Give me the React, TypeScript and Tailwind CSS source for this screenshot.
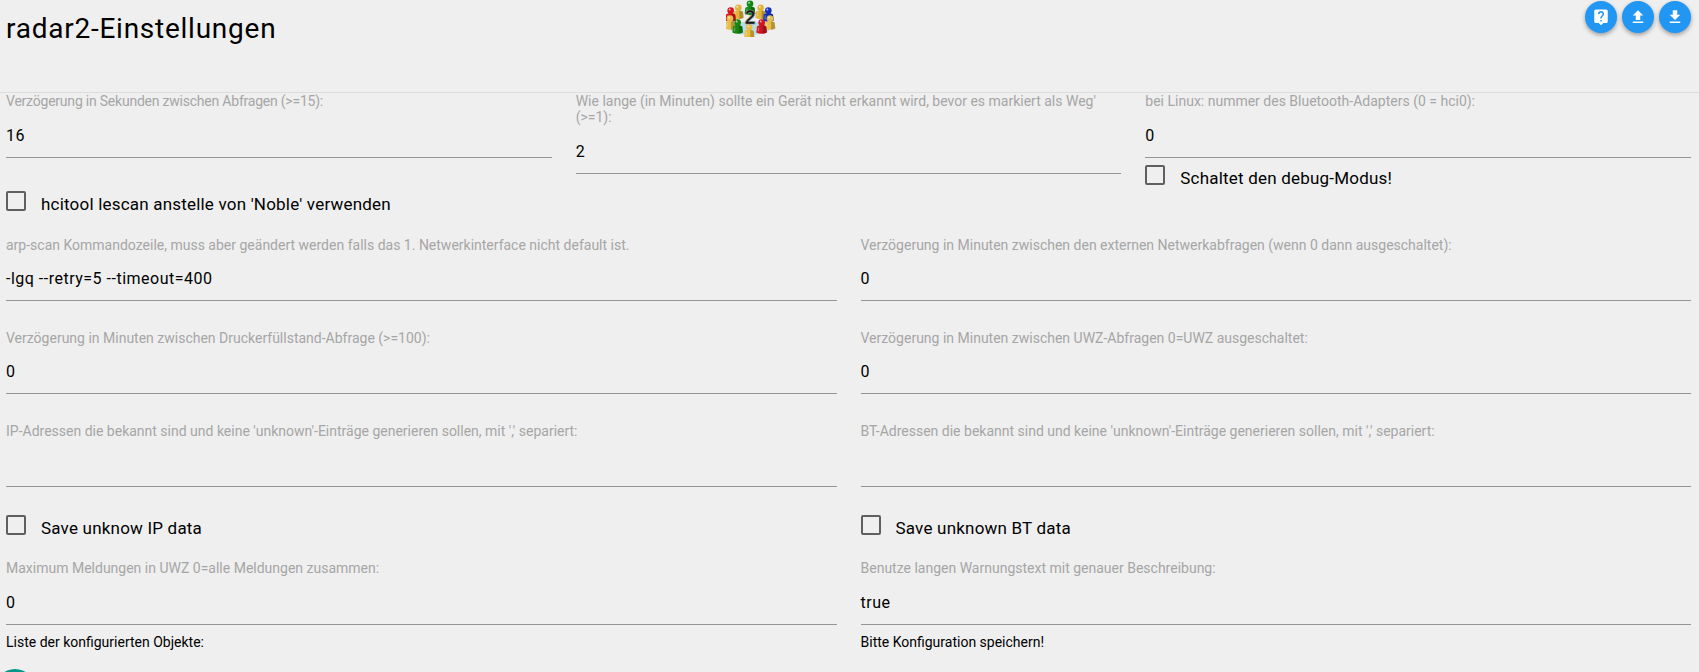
import React from "react";

const font = "font-['Roboto',sans-serif]";

function Field({ label, value, tall = false, track = "", cls = "" }: { label: string; value?: string; tall?: boolean; track?: string; cls?: string }) {
  return (
    <div className={`flex flex-col ${cls}`}>
      <div className={`text-[14px] leading-[16px] text-[#a6a6a6] ${track}`}>{label}</div>
      <div className={`${tall ? "mt-[9px]" : "mt-[8px]"} h-[40px] border-b border-[#949494] pt-[10px] text-[16px] leading-[16px] tracking-[0.5px] text-black`}>{value}</div>
    </div>
  );
}

function Check({ label, cls = "" }: { label: string; cls?: string }) {
  return (
    <div className={`flex items-start ${cls}`}>
      <span className="h-[20px] w-[20px] rounded-[2px] border-2 border-[#5f5f5f]" />
      <span className="ml-[15px] mt-[3px] text-[17px] leading-[20px] tracking-[0.2px] text-black">{label}</span>
    </div>
  );
}

function Round({ children }: { children: React.ReactNode }) {
  return (
    <span className="flex h-[32px] w-[32px] items-center justify-center rounded-full bg-[#2196f3] shadow-[0_2px_4px_rgba(0,0,0,0.35)]">
      <svg viewBox="0 0 24 24" className="h-[18px] w-[18px]" fill="#fff">{children}</svg>
    </span>
  );
}

function Person({ x, y, c, s = 1 }: { x: number; y: number; c: string; s?: number }) {
  return (
    <g transform={`translate(${x} ${y}) scale(${s})`}>
      <circle cx="0" cy="-9" r="10" fill={c} />
      <path d="M-16 21 L-14 3 Q0 -7 14 3 L16 21 Q0 29 -16 21Z" fill={c} />
      <path d="M3 -1 Q10 0 14 3 L16 21 Q9 25 3 25Z" fill="#000" opacity="0.22" />
      <circle cx="-3" cy="-12" r="3" fill="#fff" opacity="0.65" />
      <path d="M-11 6 L-12 17 L-8 18 L-7 5Z" fill="#fff" opacity="0.3" />
    </g>
  );
}

function Logo() {
  return (
    <svg viewBox="78 0 150 110" className="h-[37px] w-[50px]">
      <ellipse cx="150" cy="84" rx="60" ry="20" fill="#b9dcea" />
      <Person x={115} y={32} c="#e2b43a" />
      <Person x={182} y={32} c="#e2b43a" />
      <Person x={150} y={20} c="#0f8a12" />
      <Person x={92} y={40} c="#d8141c" />
      <Person x={205} y={40} c="#1030c0" />
      <Person x={90} y={64} c="#e6bf4a" />
      <Person x={210} y={64} c="#e6bf4a" />
      <Person x={148} y={90} c="#e8bc3c" s={0.95} />
      <text x="150" y="73" textAnchor="middle" fontSize="58" fontWeight="700" fontFamily="'Liberation Sans',sans-serif" fill="#141414" stroke="#8a8a8a" strokeWidth="2">2</text>
      <Person x={113} y={76} c="#18870f" />
      <Person x={185} y={76} c="#cf1520" />
    </svg>
  );
}

export default function App() {
  return (
    <div className={`${font} h-[672px] overflow-hidden bg-[#efefef]`}>
      <header className="relative flex h-[93px] border-b border-[#dddddd]">
        <h1 className="ml-[6px] mt-[12px] text-[28px] font-normal leading-[34px] tracking-[0.75px] text-black">radar2-Einstellungen</h1>
        <div className="absolute left-[726px] top-0"><Logo /></div>
        <div className="ml-auto mr-[8px] mt-px flex gap-[5px]">
          <Round>
            <path d="M19 2H5a2 2 0 0 0-2 2v14a2 2 0 0 0 2 2h4l3 3 3-3h4a2 2 0 0 0 2-2V4a2 2 0 0 0-2-2Zm-6 16h-2v-2h2v2Zm2.070-7.750-.9.920C13.450 11.900 13 12.500 13 14h-2v-.5c0-1.100.45-2.100 1.170-2.830l1.240-1.260c.37-.36.590-.86.590-1.410a2 2 0 0 0-4 0H8a4 4 0 0 1 8 0c0 .88-.36 1.680-.93 2.250Z" />
          </Round>
          <Round><path d="M9 16h6v-6h4l-7-7-7 7h4v6Zm-4 2h14v2H5v-2Z" /></Round>
          <Round><path d="M19 9h-4V3H9v6H5l7 7 7-7ZM5 18v2h14v-2H5Z" /></Round>
        </div>
      </header>

      <main className="pl-[6px] pr-[8px]">
        <div className="grid grid-cols-3 items-start gap-x-[24px]">
          <Field tall track="tracking-[-0.22px]" label="Verzögerung in Sekunden zwischen Abfragen (>=15):" value="16" />
          <Field tall label="Wie lange (in Minuten) sollte ein Gerät nicht erkannt wird, bevor es markiert als Weg' (>=1):" value="2" />
          <div>
            <Field tall label="bei Linux: nummer des Bluetooth-Adapters (0 = hci0):" value="0" />
            <Check label="Schaltet den debug-Modus!" cls="mt-[7px]" />
          </div>
        </div>
        <Check label="hcitool lescan anstelle von 'Noble' verwenden" cls="mt-[3px]" />

        <div className="mt-[23px] grid grid-cols-2 gap-x-[24px] gap-y-[29px]">
          <Field label="arp-scan Kommandozeile, muss aber geändert werden falls das 1. Netwerkinterface nicht default ist." value="-lgq --retry=5 --timeout=400" />
          <Field label="Verzögerung in Minuten zwischen den externen Netwerkabfragen (wenn 0 dann ausgeschaltet):" value="0" />
          <Field label="Verzögerung in Minuten zwischen Druckerfüllstand-Abfrage (>=100):" value="0" />
          <Field label="Verzögerung in Minuten zwischen UWZ-Abfragen 0=UWZ ausgeschaltet:" value="0" />
          <Field label="IP-Adressen die bekannt sind und keine 'unknown'-Einträge generieren sollen, mit ',' separiert:" />
          <Field label="BT-Adressen die bekannt sind und keine 'unknown'-Einträge generieren sollen, mit ',' separiert:" />
        </div>

        <div className="mt-[28px] grid grid-cols-2 gap-x-[24px]">
          <Check label="Save unknow IP data" />
          <Check label="Save unknown BT data" />
        </div>

        <div className="mt-[22px] grid grid-cols-2 gap-x-[24px]">
          <Field tall label="Maximum Meldungen in UWZ 0=alle Meldungen zusammen:" value="0" />
          <Field tall label="Benutze langen Warnungstext mit genauer Beschreibung:" value="true" />
        </div>

        <div className="mt-[9px] grid grid-cols-2 gap-x-[24px] text-[14px] leading-[16px] text-black">
          <div>Liste der konfigurierten Objekte:</div>
          <div>Bitte Konfiguration speichern!</div>
        </div>

        <div className="ml-[-11px] mt-[19px] h-[40px] w-[40px] rounded-full bg-[#009688]" />
      </main>
    </div>
  );
}
